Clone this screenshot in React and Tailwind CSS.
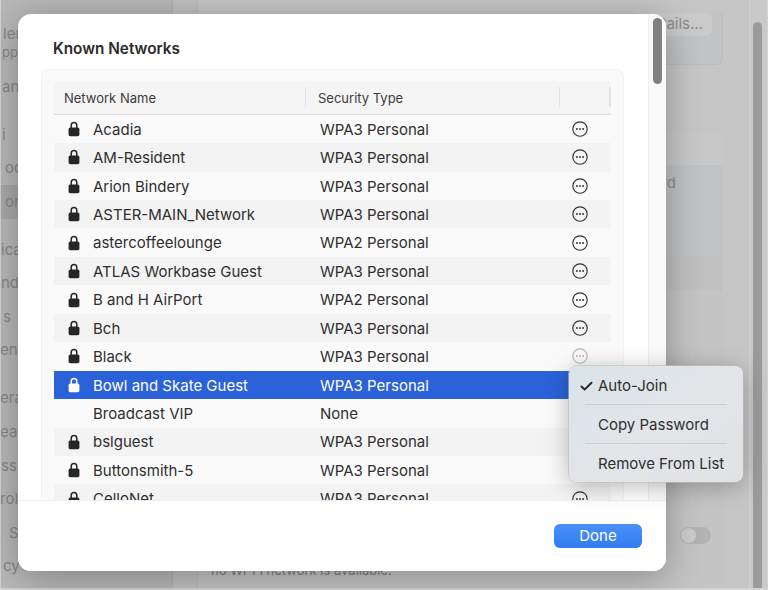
import { Check } from "lucide-react"

const networks = [
  ["Acadia", "WPA3 Personal"],
  ["AM-Resident", "WPA3 Personal"],
  ["Arion Bindery", "WPA3 Personal"],
  ["ASTER-MAIN_Network", "WPA3 Personal"],
  ["astercoffeelounge", "WPA2 Personal"],
  ["ATLAS Workbase Guest", "WPA3 Personal"],
  ["B and H AirPort", "WPA2 Personal"],
  ["Bch", "WPA3 Personal"],
  ["Black", "WPA3 Personal"],
  ["Bowl and Skate Guest", "WPA3 Personal"],
  ["Broadcast VIP", "None"],
  ["bslguest", "WPA3 Personal"],
  ["Buttonsmith-5", "WPA3 Personal"],
  ["CelloNet", "WPA3 Personal"],
]

// only the ends of the sidebar labels show beside the sheet
const SidebarItem = ({ label, className = "", selected }) => (
  <div className={`flex h-[33.6px] items-center ${selected ? "bg-[#a9a9a9]" : ""}`}>
    <span className={className}>{label}</span>
  </div>
)

const LockIcon = ({ className }) => (
  <svg width="12" height="16" viewBox="0 0 12 16" className={className}>
    <path d="M3.2 8V4.4a2.8 2.8 0 0 1 5.6 0V8" fill="none" stroke="currentColor" strokeWidth="1.5" />
    <rect x="0.6" y="6.6" width="10.8" height="8.6" rx="1.7" fill="currentColor" />
  </svg>
)

const MoreIcon = ({ className }) => (
  <svg width="16" height="16" viewBox="0 0 16 16" className={className}>
    <circle cx="8" cy="8" r="7.2" fill="none" stroke="currentColor" strokeWidth="1.15" />
    <circle cx="4.9" cy="8" r="0.95" fill="currentColor" />
    <circle cx="8" cy="8" r="0.95" fill="currentColor" />
    <circle cx="11.1" cy="8" r="0.95" fill="currentColor" />
  </svg>
)

const NetworkRow = ({ name, security, index }) => {
  const selected = name === "Bowl and Skate Guest"
  const stripe = index % 2 === 1 ? "bg-[#f3f3f3]" : "bg-[#fafafa]"
  return (
    <div className={`flex h-[28.45px] shrink-0 items-center text-[15px] ${selected ? "bg-[#2b62d9] text-white" : `${stripe} text-[#2f2f2f]`}`}>
      <div className="flex w-[39px] justify-center">
        {security !== "None" && <LockIcon className={selected ? "text-white" : "text-[#262626]"} />}
      </div>
      <div className="w-[227px] truncate pt-[2px]">{name}</div>
      <div className="w-[232px] pt-[2px]">{security}</div>
      <div className="flex w-[56px] justify-center">
        {!selected && name !== "Broadcast VIP" && (
          <MoreIcon className={name === "Black" ? "text-[#b5b5b5]" : "text-[#333333]"} />
        )}
      </div>
    </div>
  )
}

const App = () => {
  return (
    <div
      className="relative flex h-[590px] w-[768px] overflow-hidden bg-[#c6c6c6] text-[15px]"
      style={{ fontFamily: 'Inter, "Liberation Sans", sans-serif' }}
    >
      {/* dimmed settings window behind the sheet */}
      <div className="h-full w-[173px] shrink-0 overflow-hidden border-r border-[#b0b0b0] bg-[#b8b8b8] pt-[24px] text-[#878787]">
        <div className="flex h-[20px] items-center"><span className="ml-[3px]">ler</span></div>
        <div className="flex h-[18px] items-center text-[13px]"><span className="ml-[2px]">pp</span></div>
        <div className="mt-[8px]">
          <SidebarItem label="an" className="ml-[2px]" />
        </div>
        <div className="mt-[14.4px]">
          <SidebarItem label="i" className="ml-[2px]" />
          <SidebarItem label="oo" className="ml-[5px]" />
          <SidebarItem label="or" className="ml-[5px]" selected />
        </div>
        <div className="mt-[14.2px]">
          <SidebarItem label="ica" className="ml-[1px]" />
          <SidebarItem label="nd" className="ml-[1px]" />
          <SidebarItem label="s" className="ml-[3px]" />
          <SidebarItem label="en" />
        </div>
        <div className="mt-[14.6px]">
          <SidebarItem label="era" />
          <SidebarItem label="ear" />
          <SidebarItem label="ss" className="ml-[1px]" />
          <SidebarItem label="rol" />
          <SidebarItem label="S" className="ml-[9px]" />
          <SidebarItem label="cy" className="ml-[3px]" />
        </div>
      </div>
      <div className="h-full w-[25px] shrink-0 border-r border-[#b9b9b9] bg-[#c0c0c0]" />
      <div className="flex min-w-0 flex-1 flex-col pr-[26px] pt-[13px] text-[#8c8c8c]">
        <div className="flex h-[52px] justify-end rounded-b-lg border-b border-r border-[#bcbcbc] bg-[#c2c3c4] pr-[10px]">
          <div className="flex h-[23px] items-center rounded-md bg-[#cbcbcb] px-[9px]">Details...</div>
        </div>
        <div className="mt-[68px] h-[32px] rounded-t-lg bg-[#c8c8c8]" />
        <div className="h-[91px] bg-[#c0c2c3] pr-[47px] pt-[8px] text-right leading-[20px]">Password</div>
        <div className="h-[34px] bg-[#c0c0c0]" />
        <div className="flex-1 bg-[#c4c4c4]">
          <div className="flex justify-end pr-[12px] pt-[237px]">
            <div className="h-[17px] w-[31px] rounded-full bg-[#b3b3b3] p-[1px]">
              <div className="h-[15px] w-[15px] rounded-full bg-[#cbcbcb]" />
            </div>
          </div>
          <div className="mt-[17px] whitespace-nowrap pl-[13px] text-[13px] text-[#7d7d7d]">
            no Wi-Fi network is available.
          </div>
        </div>
      </div>
      <div className="h-full w-[19px] shrink-0 border-l border-[#d0d0d0] bg-[#c9c9c9] pl-[3px] pt-[22px]">
        <div className="h-full w-[9px] rounded-t-full bg-[#9b9b9b]" />
      </div>
      <div className="pointer-events-none absolute inset-0 border-b-2 border-l border-r border-[#d2d2d2]" />

      {/* Known Networks sheet */}
      <div className="absolute left-[18px] top-[14px] flex h-[557px] w-[648px] flex-col overflow-hidden rounded-[13px] bg-white shadow-[0_6px_36px_rgba(0,0,0,0.3)]">
        <div className="relative flex min-h-0 flex-1">
          <div className="min-w-0 flex-1 overflow-hidden">
            <div className="pl-[35px] pt-[25px] text-[15.3px] font-semibold leading-[20px] text-[#2a2a2a]">Known Networks</div>
            <div className="ml-[23px] mr-[24px] mt-[10px] h-[500px] rounded-t-lg border-l border-r border-t border-[#f3f3f3] bg-[#fafafa] pl-[12px] pr-[12px] pt-[11px]">
              <div className="flex h-[33.7px] items-center rounded-t border-b border-[#dcdcdc] bg-[#f5f5f5] text-[13px] text-[#3c3c3c]">
                <div className="flex h-[20px] w-[252px] items-center border-r border-[#e2e2e2] pl-[10px] pt-[2px]">Network Name</div>
                <div className="flex h-[20px] w-[254px] items-center border-r border-[#e2e2e2] pl-[12px] pt-[2px]">Security Type</div>
                <div className="h-[20px] flex-1 border-r-2 border-[#e2e2e2]" />
              </div>
              <div className="flex flex-col">
                {networks.map(([name, security], index) => (
                  <NetworkRow key={name} name={name} security={security} index={index} />
                ))}
              </div>
            </div>
          </div>
          <div className="w-[18px] shrink-0 border-l border-[#f0f0f0] bg-[#fafafa]" />
          <div className="absolute right-[4px] top-[4px] h-[66px] w-[9px] rounded-full bg-[#808080]" />
        </div>
        <div className="flex h-[71px] shrink-0 items-center justify-end border-t border-[#f0f0f0] bg-white pr-[24px]">
          <button className="h-[24px] w-[88px] rounded-[6px] bg-gradient-to-b from-[#4a90f8] to-[#2f7cf0] text-[15px] text-white">
            Done
          </button>
        </div>
      </div>

      {/* row action menu */}
      <div className="absolute left-[569px] top-[366px] w-[174px] rounded-[8px] bg-gradient-to-br from-[#d9e4e9] via-[#e3e5e8] to-[#e0e2e4] text-[15px] text-[#2f2f2f] shadow-[0_0_0_1px_rgba(190,190,190,0.6),0_4px_24px_rgba(0,0,0,0.28)]">
        <div className="flex h-[38px] items-center pl-[10px] pt-[2px]">
          <Check size={15} strokeWidth={3.2} className="mr-[4px] text-[#2a2a2a]" />
          <span>Auto-Join</span>
        </div>
        <div className="mx-[16px] border-t border-[#cbcdd0]" />
        <div className="flex h-[38px] items-center pl-[29px] pt-[2px]">Copy Password</div>
        <div className="mx-[16px] border-t border-[#cbcdd0]" />
        <div className="flex h-[38px] items-center pl-[29px] pt-[2px]">Remove From List</div>
      </div>
    </div>
  )
}

export default App
